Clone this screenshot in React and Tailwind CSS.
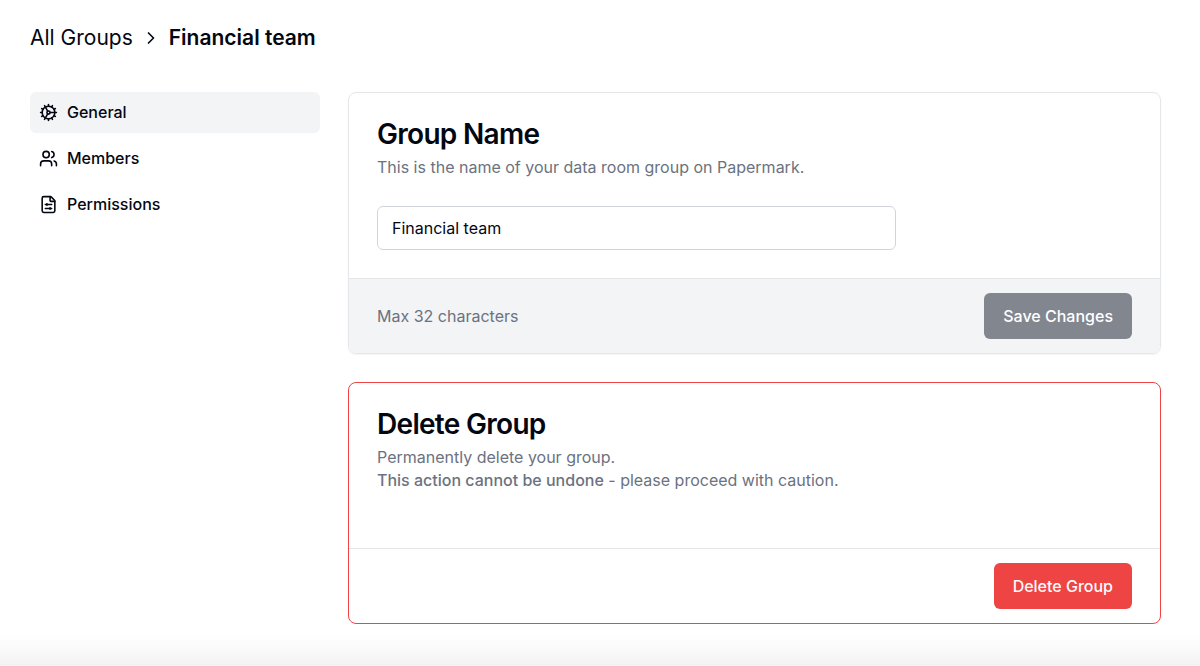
import { useState } from "react";
import { ChevronRight, Cog, Users, FileSliders } from "lucide-react";

const navItems = [
  { label: "General", icon: Cog, active: true },
  { label: "Members", icon: Users, active: false },
  { label: "Permissions", icon: FileSliders, active: false },
];

function Breadcrumb({ name }) {
  return (
    <nav aria-label="Breadcrumb" className="flex items-center text-[21px] leading-7">
      <a href="#groups">All Groups</a>
      <ChevronRight size={20} strokeWidth={2} className="mx-2" />
      <span className="font-semibold">{name}</span>
    </nav>
  );
}

function SideNav() {
  return (
    <nav aria-label="Settings" className="grid w-[290px] shrink-0 content-start gap-[5px]">
      {navItems.map(({ label, icon: Icon, active }) => (
        <a
          key={label}
          href={`#${label.toLowerCase()}`}
          className={`flex items-center gap-[9px] rounded-md px-[9px] py-2 text-base leading-[25px] font-medium ${
            active ? "bg-[#f3f4f6]" : ""
          }`}>
          <Icon size={19} />
          {label}
        </a>
      ))}
    </nav>
  );
}

function App() {
  const [name, setName] = useState("Financial team");
  const savedName = "Financial team";

  return (
    <div className="flex min-h-screen flex-col bg-white font-['Inter',sans-serif] text-[#030712]">
      <div className="px-[30px] pt-6 pb-2">
        <Breadcrumb name={savedName} />

        <div className="mt-10 flex gap-7 pr-[9px]">
          <SideNav />

          <main className="flex min-w-0 flex-1 flex-col gap-7">
            {/* Group name */}
            <form
              onSubmit={(e) => e.preventDefault()}
              className="overflow-hidden rounded-lg border border-[#e5e7eb] shadow-xs">
              <div className="px-7 pt-[23px] pb-7">
                <h2 className="text-[28px] leading-9 font-semibold tracking-tight">
                  <label htmlFor="group-name">Group Name</label>
                </h2>
                <p className="mt-1 text-base leading-[23px] text-[#6b7280]">
                  This is the name of your data room group on Papermark.
                </p>
                <input
                  id="group-name"
                  type="text"
                  maxLength={32}
                  value={name}
                  onChange={(e) => setName(e.target.value)}
                  className="mt-[27px] block h-11 w-full max-w-[519px] rounded-md border border-[#d1d5db] px-[14px] text-base"
                />
              </div>
              <div className="flex items-center justify-between border-t border-[#e5e7eb] bg-[#f3f4f6] px-7 py-[14px]">
                <p className="text-base text-[#6b7280]">Max 32 characters</p>
                <button
                  type="submit"
                  disabled={name === savedName}
                  className="h-[46px] rounded-md bg-[#111827] px-[19px] text-base font-medium text-white disabled:bg-[#82868f]">
                  Save Changes
                </button>
              </div>
            </form>

            {/* Delete group */}
            <section className="rounded-lg border border-[#ef4444]">
              <div className="px-7 pt-[23px] pb-14">
                <h2 className="text-[28px] leading-9 font-semibold tracking-tight">
                  Delete Group
                </h2>
                <p className="mt-1 text-base leading-[23px] text-[#6b7280]">
                  Permanently delete your group.
                  <br />
                  <span className="font-medium">This action cannot be undone</span>{" "}
                  - please proceed with caution.
                </p>
              </div>
              <div className="flex justify-end border-t border-[#e5e7eb] px-7 py-[14px]">
                <button
                  type="button"
                  className="h-[46px] rounded-md bg-[#ef4444] px-[19px] text-base font-medium text-gray-50">
                  Delete Group
                </button>
              </div>
            </section>
          </main>
        </div>
      </div>

      {/* Fade at the bottom of the page */}
      <div className="mt-auto h-8 bg-linear-to-b from-white via-[#fafafb] to-[#f1f2f3]" />
    </div>
  );
}

export default App;
